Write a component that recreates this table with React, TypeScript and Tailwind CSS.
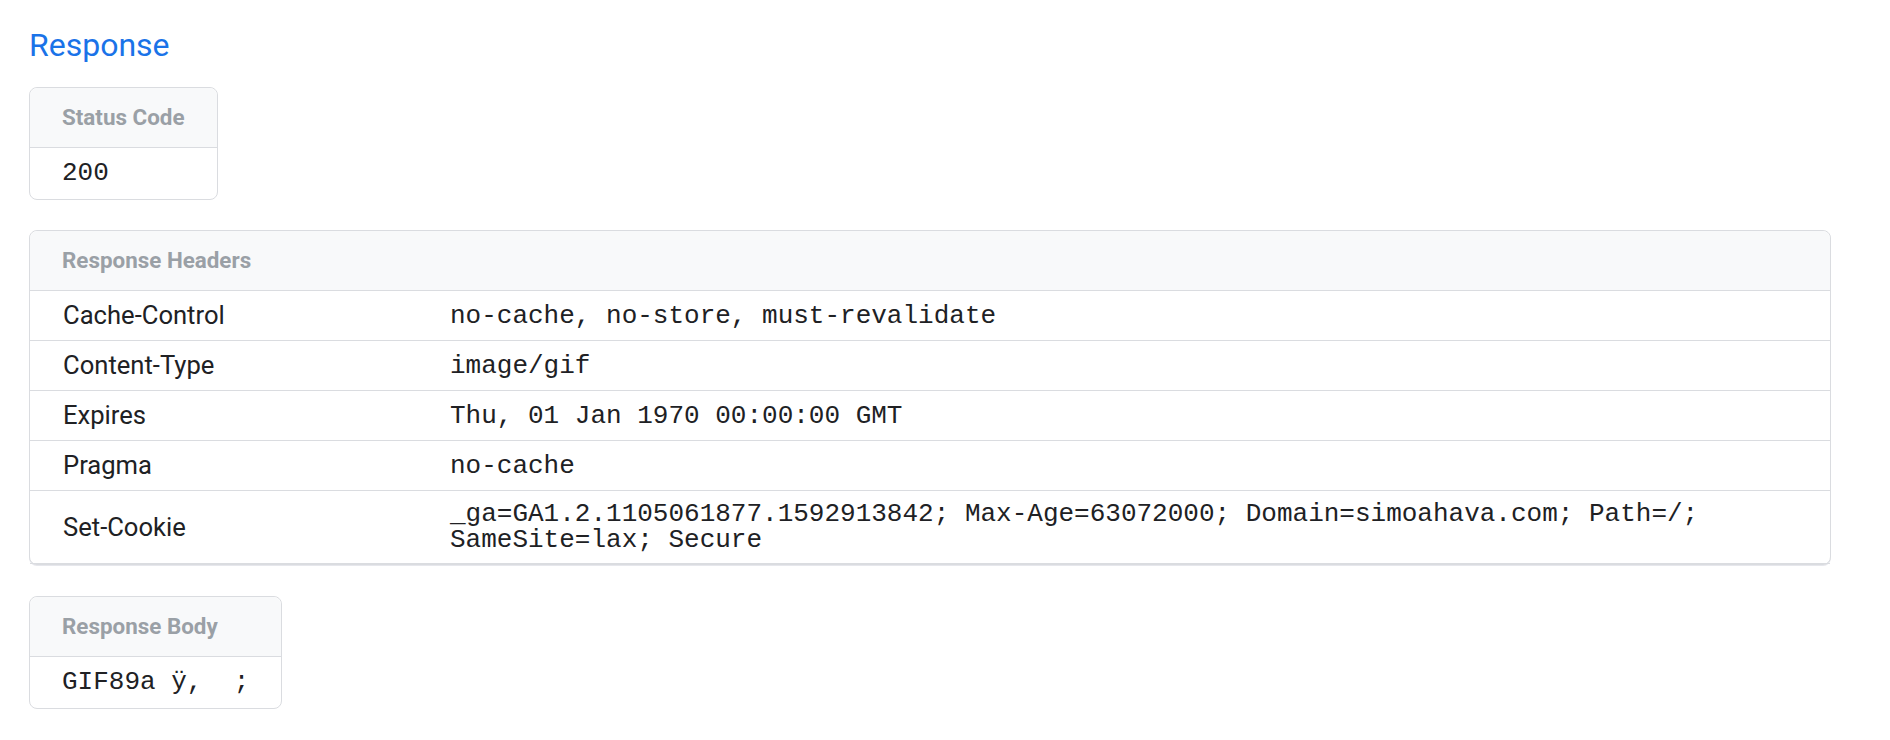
const headers: [string, string][] = [
  ['Cache-Control', 'no-cache, no-store, must-revalidate'],
  ['Content-Type', 'image/gif'],
  ['Expires', 'Thu, 01 Jan 1970 00:00:00 GMT'],
  ['Pragma', 'no-cache'],
  [
    'Set-Cookie',
    '_ga=GA1.2.1105061877.1592913842; Max-Age=63072000; Domain=simoahava.com; Path=/; SameSite=lax; Secure',
  ],
];

const mono = "font-['Liberation_Mono',monospace] text-[26px] text-[#202124]";
const label = 'text-[22.4px] font-bold text-[#9aa0a6]';

const SmallBox = ({ title, value }: { title: string; value: string }) => (
  <div className="w-fit rounded-lg border border-[#dadce0] bg-white">
    <div className={`flex h-[60px] items-center rounded-t-lg border-b border-[#dadce0] bg-[#f8f9fa] px-[32px] ${label}`}>
      {title}
    </div>
    <div className={`flex h-[51px] items-center whitespace-pre px-[32px] ${mono}`}>{value}</div>
  </div>
);

export default function App() {
  return (
    <div className="min-h-screen bg-white pl-[29px] pr-[59px] pt-[26px] font-['Roboto',sans-serif]">
      <h2 className="text-[32px] font-normal leading-[38px] text-[#1a73e8]">Response</h2>

      <div className="mt-[23px]">
        <SmallBox title="Status Code" value="200" />
      </div>

      <div className="mt-[30px] rounded-lg border border-[#dadce0] bg-white shadow-[0_1px_0_#e6e7ec]">
        <div className={`flex h-[60px] items-center rounded-t-lg border-b border-[#dadce0] bg-[#f8f9fa] px-[32px] ${label}`}>
          Response Headers
        </div>
        {headers.map(([key, value]) => (
          <div key={key} className="flex min-h-[49px] items-center border-b border-[#dadce0] box-content">
            <div className="w-[420px] shrink-0 pl-[33px] text-[25.6px] text-[#202124]">{key}</div>
            <div className={`flex-1 py-[10px] pr-[33px] leading-[26px] ${mono}`}>{value}</div>
          </div>
        ))}
      </div>

      <div className="mt-[31px]">
        <SmallBox title="Response Body" value="GIF89a ÿ,  ;" />
      </div>
    </div>
  );
}
